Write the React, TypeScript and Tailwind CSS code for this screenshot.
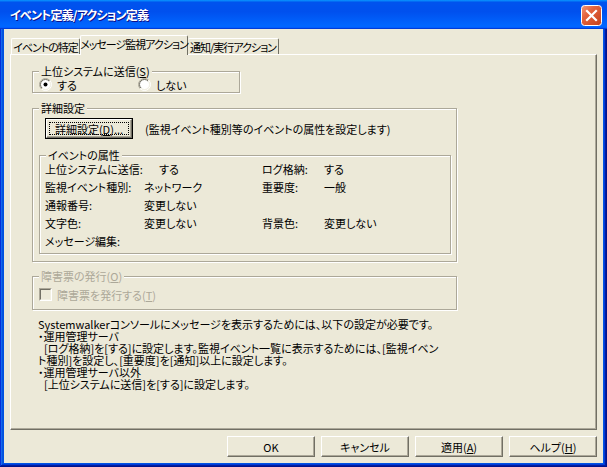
import React from "react";

function U({ children }: { children: React.ReactNode }) {
  return <span className="underline underline-offset-[1px] decoration-[1px]">{children}</span>;
}

function Group({
  label,
  disabled,
  className,
  children,
}: {
  label: React.ReactNode;
  disabled?: boolean;
  className?: string;
  children?: React.ReactNode;
}) {
  return (
    <div className={`border border-[#aca899] shadow-[inset_1px_1px_0_#fff,1px_1px_0_#fff] ${className ?? ""}`}>
      <div
        className={`-mt-[7px] ml-[6px] px-[2px] w-fit h-[12px] leading-[12px] whitespace-nowrap bg-[#ece9d8] ${
          disabled ? "text-[#aca899]" : "text-black"
        }`}
      >
        {label}
      </div>
      {children}
    </div>
  );
}

function Radio({ checked, id }: { checked?: boolean; id: string }) {
  return (
    <svg width="13" height="13" viewBox="0 0 13 13" className="shrink-0">
      <defs>
        <linearGradient id={`o${id}`} x1="0" y1="0" x2="1" y2="1">
          <stop offset="0.5" stopColor="#aca899" />
          <stop offset="0.5" stopColor="#ffffff" />
        </linearGradient>
        <linearGradient id={`i${id}`} x1="0" y1="0" x2="1" y2="1">
          <stop offset="0.5" stopColor="#716f64" />
          <stop offset="0.5" stopColor="#f1efe2" />
        </linearGradient>
      </defs>
      <circle cx="6.5" cy="6.5" r="6" fill="none" stroke={`url(#o${id})`} strokeWidth="1" />
      <circle cx="6.5" cy="6.5" r="5" fill="#ffffff" stroke={`url(#i${id})`} strokeWidth="1" />
      {checked && <circle cx="6.5" cy="6.5" r="2" fill="#000" />}
    </svg>
  );
}

function Btn({ children, className }: { children: React.ReactNode; className?: string }) {
  return (
    <div
      className={`flex items-center justify-center h-[21px] w-[88px] bg-[#ece9d8] border border-t-white border-l-white border-r-[#716f64] border-b-[#716f64] shadow-[inset_-1px_-1px_0_#aca899] leading-[12px] ${
        className ?? ""
      }`}
    >
      {children}
    </div>
  );
}

function Row({
  l1,
  v1,
  w1,
  l2,
  v2,
}: {
  l1: string;
  v1?: string;
  w1: string;
  l2?: string;
  v2?: string;
}) {
  return (
    <div className="flex items-center h-[18px] whitespace-nowrap">
      <div className="flex w-[217px]">
        <div className={w1}>{l1}</div>
        <div>{v1}</div>
      </div>
      {l2 && (
        <div className="flex">
          <div className="w-[62px]">{l2}</div>
          <div>{v2}</div>
        </div>
      )}
    </div>
  );
}

export default function App() {
  return (
    <div className="w-[607px] h-[467px] flex flex-col bg-[#0054e3] shadow-[inset_-1px_-1px_#00138c,inset_1px_1px_#0831d9,inset_-2px_-2px_#001ea0,inset_2px_2px_#166aee,inset_-3px_-3px_#003bda,inset_3px_3px_#0855dd] font-['Noto_Sans_CJK_JP',sans-serif] [font-feature-settings:'palt'] text-[11px] text-black overflow-hidden">
      {/* Title bar */}
      <div className="h-[29px] shrink-0 flex items-center pl-[10px] pr-[5px] bg-[linear-gradient(180deg,#0997ff,#0053ee_8%,#0050ee_40%,#06f_88%,#06f_93%,#005bff_95%,#003dd7_96%,#003dd7)]">
        <div className="flex-1 text-white font-bold text-[12px] leading-[14px] tracking-[-0.8px] [text-shadow:1px_1px_#0f1089] whitespace-nowrap">
          イベント定義/アクション定義
        </div>
        <svg width="21" height="21" viewBox="0 0 21 21" className="mt-[1px]">
          <defs>
            <linearGradient id="cb" x1="0" y1="0" x2="1" y2="1">
              <stop offset="0" stopColor="#f29a7c" />
              <stop offset="0.35" stopColor="#e4643e" />
              <stop offset="1" stopColor="#c4401a" />
            </linearGradient>
          </defs>
          <rect x="0.5" y="0.5" width="20" height="20" rx="3" fill="url(#cb)" stroke="#ffffff" strokeWidth="1" />
          <path d="M6 6 L15 15 M15 6 L6 15" stroke="#ffffff" strokeWidth="2.2" strokeLinecap="square" />
        </svg>
      </div>

      {/* Body */}
      <div className="flex-1 mx-[4px] mb-[4px] bg-[#ece9d8] flex flex-col px-[6px] pt-[6px] pb-[6px]">
        {/* Tabs */}
        <div className="flex items-end h-[19px] relative z-10 whitespace-nowrap tracking-[-1px]">
          <div className="ml-[1px] w-[69px] shrink-0 h-[16px] border-t border-l border-r border-t-white border-l-white border-r-[#716f64] rounded-t-[2px] flex items-center justify-center leading-[12px]">
            イベントの特定
          </div>
          <div className="w-[108px] shrink-0 h-[20px] -mb-[1px] bg-[#ece9d8] border-t border-l border-r border-t-white border-l-white border-r-[#716f64] rounded-t-[2px] flex items-center justify-center leading-[12px] pb-[3px]">
            メッセージ監視アクション
          </div>
          <div className="w-[91px] shrink-0 h-[16px] border-t border-r border-t-white border-r-[#716f64] rounded-t-[2px] flex items-center justify-center leading-[12px]">
            通知/実行アクション
          </div>
        </div>

        {/* Panel */}
        <div className="flex-1 border border-t-white border-l-white border-r-[#716f64] border-b-[#716f64] shadow-[inset_-1px_-1px_0_#aca899] pl-[21px] flex flex-col">
          <Group
            className="mt-[16px] w-[208px] h-[22px]"
            label={
              <>
                上位システムに送信(<U>S</U>)
              </>
            }
          >
            <div className="mt-[1px] h-[13px] flex items-center pl-[6px] leading-[12px] whitespace-nowrap">
              <div className="flex items-center w-[99px]">
                <Radio id="a" checked />
                <span className="ml-[5px]">する</span>
              </div>
              <div className="flex items-center">
                <Radio id="b" />
                <span className="ml-[5px]">しない</span>
              </div>
            </div>
          </Group>

          <Group className="mt-[15px] w-[425px] h-[154px]" label="詳細設定">
            <div className="mt-[4px] pl-[12px] flex items-center whitespace-nowrap">
              <div className="w-[88px] h-[21px] border border-black">
                <div className="h-full border border-t-white border-l-white border-r-[#716f64] border-b-[#716f64] shadow-[inset_-1px_-1px_0_#aca899] flex p-[2px]">
                  <div className="flex-1 border border-dotted border-black flex items-center justify-center leading-[12px]">
                    詳細設定(<U>D</U>)...
                  </div>
                </div>
              </div>
              <div className="ml-[12px] leading-[12px]">(監視イベント種別等のイベントの属性を設定します)</div>
            </div>

            <Group className="mt-[16px] ml-[6px] w-[412px] h-[99px]" label="イベントの属性">
              <div className="-mt-[1px] pl-[5px] leading-[12px]">
                <Row l1="上位システムに送信:" w1="w-[114px]" v1="する" l2="ログ格納:" v2="する" />
                <Row l1="監視イベント種別:" w1="w-[99px]" v1="ネットワーク" l2="重要度:" v2="一般" />
                <Row l1="通報番号:" w1="w-[99px]" v1="変更しない" />
                <Row l1="文字色:" w1="w-[99px]" v1="変更しない" l2="背景色:" v2="変更しない" />
                <Row l1="メッセージ編集:" w1="w-[99px]" />
              </div>
            </Group>
          </Group>

          <Group
            disabled
            className="mt-[14px] w-[425px] h-[34px]"
            label={
              <>
                障害票の発行(<U>O</U>)
              </>
            }
          >
            <div className="mt-[6px] pl-[6px] flex items-center h-[13px] whitespace-nowrap">
              <div className="w-[13px] h-[13px] border border-t-[#aca899] border-l-[#aca899] border-r-white border-b-white">
                <div className="w-full h-full border border-t-[#716f64] border-l-[#716f64] border-r-[#f1efe2] border-b-[#f1efe2] bg-[#ece9d8]" />
              </div>
              <span className="ml-[5px] text-[#aca899] leading-[12px]">
                障害票を発行する(<U>T</U>)
              </span>
            </div>
          </Group>

          <div className="mt-[8px] pl-[6px] leading-[12px] whitespace-nowrap">
            <div>Systemwalkerコンソールにメッセージを表示するためには、以下の設定が必要です。</div>
            <div>・運用管理サーバ</div>
            <div className="pl-[6px]">[ログ格納]を[する]に設定します。監視イベント一覧に表示するためには、[監視イベン</div>
            <div>ト種別]を設定し、[重要度]を[通知]以上に設定します。</div>
            <div>・運用管理サーバ以外</div>
            <div className="pl-[6px]">[上位システムに送信]を[する]に設定します。</div>
          </div>
        </div>

        {/* Buttons */}
        <div className="mt-[6px] flex justify-end gap-[6px] whitespace-nowrap">
          <Btn>OK</Btn>
          <Btn>キャンセル</Btn>
          <Btn>
            適用(<U>A</U>)
          </Btn>
          <Btn>
            ヘルプ(<U>H</U>)
          </Btn>
        </div>
      </div>
    </div>
  );
}
